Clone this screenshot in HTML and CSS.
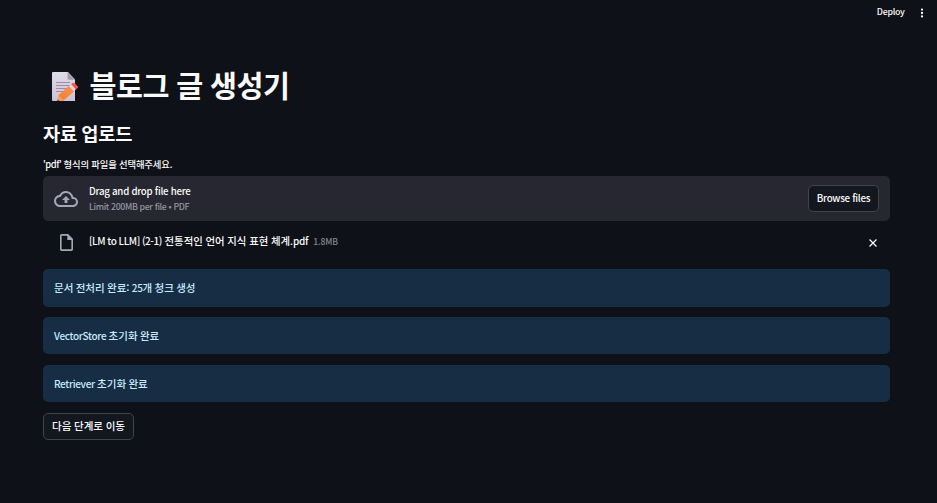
FILE: index.html
```html
<!DOCTYPE html>
<html lang="ko">
<head>
<meta charset="utf-8">
<title>블로그 글 생성기</title>
<link rel="stylesheet" href="styles.css">
</head>
<body>
<header class="toolbar">
  <button class="deploy">Deploy</button>
  <svg class="menu" viewBox="0 0 16 16"><circle cx="8" cy="4.600" r="1.150"/><circle cx="8" cy="8" r="1.150"/><circle cx="8" cy="11.400" r="1.150"/></svg>
</header>
<main class="content">
  <h1 class="title">
    <svg class="memo" viewBox="0 0 28 30">
      <defs>
        <linearGradient id="paper" x1="0" y1="0" x2="0" y2="1"><stop offset="0" stop-color="#dfdae8"/><stop offset="1" stop-color="#cdc2d4"/></linearGradient>
        <linearGradient id="pencil" x1="1" y1="0" x2="0" y2="1"><stop offset="0" stop-color="#ff9155"/><stop offset="1" stop-color="#ed7f2b"/></linearGradient>
      </defs>
      <path fill="url(#paper)" d="M1 0h15l7 7.500V29H1q-1 0-1-1V1q0-1 1-1z"/>
      <path fill="#a69aae" d="M15.500 0 23 7.700h-6q-1.500 0-1.500-1.500z"/>
      <path stroke="#9a8ea5" stroke-width="1" d="M4 10.500h14M4 13.500h14M4 16.500h12M4 19.500h8"/>
      <path fill="url(#pencil)" d="m17 13.800 5.300 5.400L11.500 28.500l-6 .5L6.700 23z"/>
      <path fill="#f8a060" d="m6.700 23 4.800 5.500-6 .5z"/>
      <path fill="#473346" d="m5.900 27.300 1.500 1.500-2.200.2z"/>
      <path fill="#ded7e3" d="m16.900 14 2.500-2.100 4.700 5.200-2.300 2.100z"/>
      <path fill="#fa5147" d="m19.200 12.200 1.500-1.200q1-.7 2 .2l2.900 3q.9 1 0 1.900l-1.600 1.300z"/>
    </svg>
    <span class="title-text">블로그 글 생성기</span>
  </h1>
  <h3 class="subtitle">자료 업로드</h3>
  <div class="label"><span class="latin">'pdf'</span> 형식의 파일을 선택해주세요.</div>
  <section class="dropzone">
    <svg class="cloud" viewBox="0 0 24 24"><path d="M19.350 10.040A7.490 7.490 0 0 0 12 4C9.110 4 6.600 5.640 5.350 8.040A5.994 5.994 0 0 0 0 14c0 3.310 2.690 6 6 6h13c2.760 0 5-2.240 5-5 0-2.640-2.050-4.780-4.650-4.960zM19 18H6c-2.210 0-4-1.790-4-4 0-2.050 1.530-3.760 3.560-3.970l1.070-.11.5-.95A5.469 5.469 0 0 1 12 6c2.620 0 4.880 1.860 5.390 4.430l.3 1.500 1.530.11A2.980 2.980 0 0 1 22 15c0 1.650-1.350 3-3 3zM8 13h2.550v3h2.900v-3H16l-4-4z"/></svg>
    <div class="hint">
      <span class="hint-main">Drag and drop file here</span>
      <span class="hint-sub">Limit 200MB per file • PDF</span>
    </div>
    <button class="btn browse">Browse files</button>
  </section>
  <div class="file">
    <svg class="doc" viewBox="4 2 16 20" preserveAspectRatio="none"><path d="M14 2H6c-1.100 0-1.990.9-1.990 2L4 20c0 1.100.89 2 1.990 2H18c1.100 0 2-.9 2-2V8l-6-6zM6 20V4h7v5h5v11H6z"/></svg>
    <span class="file-name"><span class="latin">[LM to LLM] (2-1)</span> 전통적인 언어 지식 표현 체계<span class="ext">.pdf</span></span>
    <span class="file-size">1.8MB</span>
    <svg class="close" viewBox="0 0 10 10"><path d="m1.500 1.500 7 7m0-7-7 7"/></svg>
  </div>
  <div class="alerts">
    <div class="alert">문서 전처리 완료: <span class="latin">25</span>개 청크 생성</div>
    <div class="alert"><span class="latin">VectorStore</span> 초기화 완료</div>
    <div class="alert"><span class="latin">Retriever</span> 초기화 완료</div>
  </div>
  <button class="btn next">다음 단계로 이동</button>
</main>
</body>
</html>
```
FILE: styles.css
```css
* { box-sizing: border-box; }
body {
  margin: 0;
  height: 503px;
  overflow: hidden;
  background: #0e1117;
  color: #fafafa;
  font: 400 10.67px/16px "Noto Sans CJK KR", sans-serif;
}
button { font: inherit; color: inherit; padding: 0; border: 0; background: none; white-space: nowrap; }
.toolbar { height: 40px; padding: 5px 7px 0 0; display: flex; justify-content: flex-end; align-items: flex-start; }
.deploy { font-size: 8.8px; line-height: 14px; font-weight: 500; letter-spacing: -0.3px; margin-right: 9.5px; }
.menu { width: 16px; height: 16px; fill: #fafafa; }
.content { padding: 0 47px 0 43px; display: flex; flex-direction: column; align-items: stretch; }
.title { margin: 24px 0 0; height: 42px; display: flex; align-items: center; font-size: 29.33px; line-height: 42px; font-weight: 700; letter-spacing: -0.45px; word-spacing: -0.6px; white-space: nowrap; }
.title-text { margin-top: -2px; }
.memo { width: 28px; height: 30px; margin: 3px 9.5px 0 9px; }
.subtitle { margin: 15px 0 0; font-size: 18.67px; line-height: 24px; font-weight: 700; letter-spacing: -0.25px; word-spacing: -0.5px; }
.label { margin-top: 11px; height: 19px; font-size: 9.33px; line-height: 16px; font-weight: 500; letter-spacing: -0.12px; word-spacing: -0.2px; }
.label .latin { letter-spacing: -0.45px; }
.dropzone { height: 45px; margin-top: 1px; padding: 0 11px; border-radius: 5px; background: #262730; display: flex; align-items: center; }
.cloud { width: 24px; height: 24px; fill: #a3a8b8; margin-right: 11px; }
.hint { flex: 1; display: flex; flex-direction: column; margin-top: -1px; }
.hint-main { font-size: 9.7px; line-height: 16px; font-weight: 500; letter-spacing: -0.26px; }
.hint-sub { font-size: 8.8px; line-height: 14px; margin: 1px 0 -1px; font-weight: 500; letter-spacing: -0.36px; color: #93959e; }
.btn { height: 27px; border: 1px solid #41444c; border-radius: 5px; background: #131720; font-weight: 500; line-height: 24px; padding-bottom: 1px; }
.browse { width: 71px; font-size: 9.8px; letter-spacing: -0.3px; }
.file { height: 27px; margin-top: 8px; padding: 0 12px 0 17px; display: flex; align-items: center; }
.doc { width: 13px; height: 17px; fill: #a3a8b8; margin-right: 16px; }
.file-name { font-size: 10.4px; font-weight: 500; margin-top: -3px; word-spacing: -0.2px; white-space: nowrap; }
.file-name .latin { font-size: 10px; letter-spacing: -0.44px; }
.ext { font-size: 10px; letter-spacing: -0.2px; }
.file-size { font-size: 8.6px; font-weight: 500; letter-spacing: -0.15px; color: #83858e; margin: -3px 0 0 5px; }
.close { width: 10px; height: 10px; margin-left: auto; fill: none; stroke: #fafafa; stroke-width: 1.3; }
.alerts { margin-top: 13px; display: flex; flex-direction: column; gap: 11px; }
.alert { height: 37px; padding: 11px; line-height: 15px; border-radius: 5px; background: #172d43; color: #c7ebff; font-size: 10.5px; font-weight: 500; word-spacing: -0.6px; }
.alert:first-child { height: 38px; margin-bottom: -1px; }
.alert .latin { font-size: 10px; letter-spacing: -0.33px; }
.next { width: 91px; margin-top: 11px; font-size: 10.5px; word-spacing: -0.3px; }
```
